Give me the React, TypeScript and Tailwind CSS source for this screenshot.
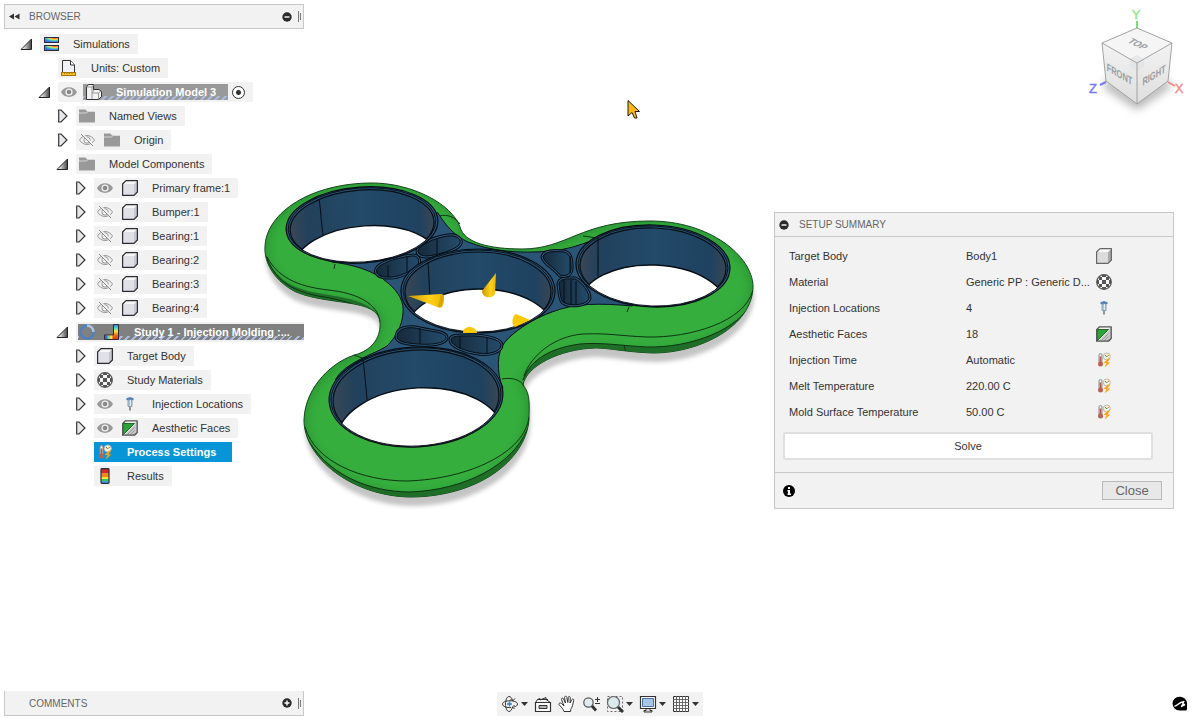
import type { ReactNode } from "react";

export default function App() {
  return (
    <div className="relative flex h-screen min-h-[560px] flex-col justify-between overflow-hidden bg-white font-['Liberation_Sans',Arial,sans-serif] text-[11px] text-[#333]">
      <Viewport />

      <div className="relative flex items-start justify-between">
        <aside className="w-[300px] pt-1 ml-1">
          <header className="flex h-[25px] items-center border border-[#c8c8c8] bg-[#f2f2f2] pr-0.5 pl-1">
            <button type="button" aria-label="Collapse browser" className="flex w-5 items-center">
              <svg width="11" height="7" viewBox="0 0 11 7" fill="#333">
                <path d="M5 0.5V6.5L0 3.5ZM10.5 0.5V6.5L5.5 3.5Z" />
              </svg>
            </button>
            <h2 className="flex-1 text-[10px] text-[#666]">BROWSER</h2>
            <RoundButton label="Minimize browser" />
            <Grip />
          </header>

          <ul className="mt-[5px] pl-4">
            <Row label="Simulations" state="open" icon={<SimulationsIcon />}>
              <Row label="Units: Custom" icon={<UnitsIcon />} />
              <Row label="Simulation Model 3" state="open" eye="on" tone="active" icon={<ModelIcon />}>
                <Row label="Named Views" state="closed" icon={<FolderIcon />} />
                <Row label="Origin" state="closed" eye="off" icon={<FolderIcon />} />
                <Row label="Model Components" state="open" icon={<FolderIcon />}>
                  <Row label="Primary frame:1" state="closed" eye="on" icon={<BodyIcon />} />
                  <Row label="Bumper:1" state="closed" eye="off" icon={<BodyIcon />} />
                  <Row label="Bearing:1" state="closed" eye="off" icon={<BodyIcon />} />
                  <Row label="Bearing:2" state="closed" eye="off" icon={<BodyIcon />} />
                  <Row label="Bearing:3" state="closed" eye="off" icon={<BodyIcon />} />
                  <Row label="Bearing:4" state="closed" eye="off" icon={<BodyIcon />} />
                </Row>
                <Row label="Study 1 - Injection Molding :..." state="open" tone="study" icon={<StudyIcon />}>
                  <Row label="Target Body" state="closed" icon={<BodyIcon />} />
                  <Row label="Study Materials" state="closed" icon={<MaterialIcon />} />
                  <Row label="Injection Locations" state="closed" eye="on" icon={<InjectionIcon />} />
                  <Row label="Aesthetic Faces" state="closed" eye="on" icon={<FacesIcon />} />
                  <Row label="Process Settings" tone="selected" icon={<ProcessIcon />} />
                  <Row label="Results" icon={<ResultsIcon />} />
                </Row>
              </Row>
            </Row>
          </ul>
        </aside>

        <div className="flex flex-col items-end">
          <ViewCube />
          <SetupSummary />
        </div>
      </div>

      <footer className="relative grid grid-cols-[1fr_auto_1fr] items-end pb-1">
        <div className="ml-1 flex h-[25px] w-[300px] items-center border border-t-0 border-[#c8c8c8] bg-[#f2f2f2] pr-0.5 pl-6">
          <h2 className="flex-1 text-[10px] text-[#666]">COMMENTS</h2>
          <RoundButton label="Add comment" plus />
          <Grip />
        </div>
        <Toolbar />
        <button type="button" aria-label="Assistant" className="mr-3 mb-1 justify-self-end">
          <svg width="16" height="16" viewBox="0 0 16 16">
            <path d="M7.500 0.800a7 6.800 0 1 0 0 13.600H13.500a1.500 1.500 0 0 0 1.500-1.500V7.500A7 6.800 0 0 0 7.500 0.800Z" fill="#000" />
            <path d="M2.500 10.200C6 10 6.500 6 11.500 5.800M12 5L10.500 8.500H13L9 10.500" fill="none" stroke="#fff" strokeWidth="1.400" />
          </svg>
        </button>
      </footer>
    </div>
  );
}

/* ---------- browser tree ---------- */

type RowProps = {
  label: string;
  icon: ReactNode;
  state?: "open" | "closed";
  eye?: "on" | "off";
  tone?: "active" | "study" | "selected";
  children?: ReactNode;
};

function Row({ label, icon, state, eye, tone, children }: RowProps) {
  return (
    <li>
      <div className="mb-1 flex h-5 items-center">
        <span className="flex w-5 shrink-0 items-center">
          {state && (
            <button type="button" aria-label={`Toggle ${label}`} aria-expanded={state === "open"}>
              {state === "open" ? <OpenArrow /> : <ClosedArrow />}
            </button>
          )}
        </span>

        {tone === "study" ? (
          <div className="flex h-5 flex-1 items-center bg-[#f2f2f2] pl-0.5">
            <div className="flex h-4 flex-1 items-center bg-[#808080] bg-[repeating-linear-gradient(135deg,#a9b9dc_0px,#a9b9dc_2px,transparent_2px,transparent_5px)] bg-[length:100%_4px] bg-bottom bg-no-repeat pl-px font-bold text-white">
              <span className="flex bg-[#808080] pr-[9px]">
                <Spinner />
              </span>
              {icon}
              <button type="button" className="ml-3.5 whitespace-nowrap">{label}</button>
            </div>
          </div>
        ) : tone === "active" ? (
          <div className="flex h-5 items-center bg-[#f2f2f2] pr-2 pl-[3px]">
            <EyeButton on label={label} />
            <div className="ml-1.5 flex h-4 items-center bg-[#999] bg-[repeating-linear-gradient(135deg,#a9b9dc_0px,#a9b9dc_2px,transparent_2px,transparent_5px)] bg-[length:100%_4px] bg-bottom bg-no-repeat pr-3 pl-[3px] font-bold text-white">
              {icon}
              <button type="button" className="ml-3.5 whitespace-nowrap">{label}</button>
            </div>
            <input
              type="radio"
              defaultChecked
              aria-label={`Activate ${label}`}
              className="ml-1 size-[13px] appearance-none rounded-full border border-[#333] bg-[radial-gradient(circle,#333_0px,#333_2px,#fff_3px)]"
            />
          </div>
        ) : (
          <div className={`flex h-5 items-center pl-[3px] ${tone === "selected" ? "bg-[#0696d7] pr-4 font-bold text-white" : "bg-[#f2f2f2] pr-2"}`}>
            {eye && (
              <span className="mr-[9px] flex">
                <EyeButton on={eye === "on"} label={label} />
              </span>
            )}
            {icon}
            <button type="button" className="ml-3.5 whitespace-nowrap">{label}</button>
          </div>
        )}
      </div>
      {children && <ul className="pl-[18px]">{children}</ul>}
    </li>
  );
}

function OpenArrow() {
  return (
    <svg width="12" height="12" viewBox="0 0 12 12">
      <defs>
        <linearGradient id="arrow" x1="0" y1="0" x2="1" y2="0">
          <stop offset="0.200" stopColor="#eee" />
          <stop offset="1" stopColor="#444" />
        </linearGradient>
      </defs>
      <path d="M11.500 1V11.500H1Z" fill="url(#arrow)" stroke="#222" />
    </svg>
  );
}

function ClosedArrow() {
  return (
    <svg width="12" height="14" viewBox="0 0 12 14" className="ml-0.5">
      <path d="M0.700 1H3L9 7L3 13H0.700Z" fill="#e6e8ec" stroke="#333" strokeWidth="1.200" />
    </svg>
  );
}

function EyeButton({ on, label }: { on: boolean; label: string }) {
  return (
    <button type="button" aria-label={`Visibility of ${label}`}>
      {on ? (
        <svg width="16" height="16" viewBox="0 0 16 16">
          <path d="M0 8C3 1.500 13 1.500 16 8C13 14.500 3 14.500 0 8Z" fill="#999" />
          <circle cx="8" cy="8" r="3.600" fill="#f2f2f2" />
          <circle cx="8" cy="8" r="2.300" fill="#888" />
        </svg>
      ) : (
        <svg width="16" height="16" viewBox="0 0 16 16" fill="none" stroke="#999">
          <path d="M0.500 8C4 2 12 2 15.500 8C12 14 4 14 0.500 8Z" />
          <circle cx="8" cy="8" r="3.200" />
          <path d="M3.500 2L15 13.500" stroke="#f2f2f2" strokeWidth="1.500" />
          <path d="M2 2L14 14" stroke="#888" />
        </svg>
      )}
    </button>
  );
}

function Spinner() {
  return (
    <svg width="16" height="16" viewBox="0 0 16 16" fill="none" strokeWidth="2.500">
      <circle cx="8" cy="8" r="6.500" stroke="#4d80bd" />
      <path d="M8 1.500A6.500 6.500 0 0 1 14.500 8" stroke="#b4c3d6" />
    </svg>
  );
}

/* ---------- 16px icons ---------- */

function SimulationsIcon() {
  return (
    <svg width="16" height="16" viewBox="0 0 16 16">
      <defs>
        <radialGradient id="heat" cx="0.750" cy="0" r="0.850" gradientUnits="objectBoundingBox">
          <stop offset="0" stopColor="#e8302a" />
          <stop offset="0.250" stopColor="#fb7a2c" />
          <stop offset="0.450" stopColor="#f6d646" />
          <stop offset="0.700" stopColor="#58d4b4" />
          <stop offset="1" stopColor="#3a78e0" />
        </radialGradient>
      </defs>
      <rect x="1.500" y="1.500" width="14" height="5" fill="url(#heat)" stroke="#2b2b3a" />
      <rect x="1.500" y="9.500" width="14" height="5" fill="url(#heat)" stroke="#2b2b3a" />
    </svg>
  );
}

function UnitsIcon() {
  return (
    <svg width="16" height="16" viewBox="0 0 16 16">
      <path d="M1.500 13V0.500H9.500L13.500 5V13Z" fill="#f1f3f7" stroke="#333" />
      <path d="M9.500 0.500V5H13.500" fill="#fff" stroke="#333" />
      <rect x="0.500" y="12.500" width="14" height="3" fill="#f5c52c" stroke="#a87400" />
      <path d="M3.500 12.500V14M6 12.500V14M8.500 12.500V14M11 12.500V14" stroke="#a87400" />
    </svg>
  );
}

function ModelIcon() {
  return (
    <svg width="16" height="16" viewBox="0 0 16 16" stroke="#333" strokeLinejoin="round">
      <path d="M0.500 3L2.500 0.500H7.500V5.500H13L15.500 7.500V12.500L12.500 15.500H0.500Z" fill="#f2f2f5" />
      <path d="M0.500 3H6L7.500 1M6 3V15M6 9L8 6M6 9H12.500V15M12.500 9L15 7" fill="none" stroke="#999" />
    </svg>
  );
}

function FolderIcon() {
  return (
    <svg width="16" height="16" viewBox="0 0 16 16" fill="#999">
      <path d="M0 1.500H6.500L8 3.500H16V14.500H0Z" />
      <path d="M0 5H7.500L9 3.500H16" fill="none" stroke="#ddd" strokeWidth="0.900" />
    </svg>
  );
}

function BodyIcon({ gray }: { gray?: boolean }) {
  return (
    <svg width="16" height="16" viewBox="0 0 16 16" strokeLinejoin="round">
      <path d="M0.800 4L4 0.800H15.200V12L12 15.200H0.800Z" fill={gray ? "#dadada" : "#fafafb"} />
      <path d="M0.800 4H12V15.200H0.800Z" fill={gray ? "#dcdcdc" : "#dfe1e7"} />
      <path d="M12 4L15.200 0.800V12L12 15.200Z" fill={gray ? "#aaa" : "#c6c8d2"} />
      <path d="M1 4H12L15 1H4Z" fill="#f7f7f8" />
      <path d="M0.600 4L4 0.600H15.400V12L12 15.400H0.600Z" fill="none" stroke={gray ? "#666" : "#2b2b30"} strokeWidth="1.200" />
    </svg>
  );
}

function MaterialIcon() {
  return (
    <svg width="16" height="16" viewBox="0 0 16 16">
      <circle cx="8" cy="8" r="7.300" fill="#f6f6f6" stroke="#555" strokeWidth="1.300" />
      <path
        d="M6 6H10V10H6ZM3 3H6V6H3ZM10 3H13V6H10ZM3 10H6V13H3ZM10 10H13V13H10ZM6 1H10V3H6ZM6 13H10V15H6ZM1 6H3V10H1ZM13 6H15V10H13Z"
        fill="#555"
      />
    </svg>
  );
}

function InjectionIcon() {
  return (
    <svg width="16" height="16" viewBox="0 0 16 16">
      <path d="M4.500 3H11.500" stroke="#4d7db3" strokeWidth="2.200" />
      <path d="M6.500 1.500H9.500" stroke="#7898bb" />
      <path d="M6 4H10V10.500H6Z" fill="#a9c7df" stroke="#8c9dad" />
      <path d="M8.500 4V10" stroke="#dcecf5" />
      <path d="M8 11V14.500" stroke="#8a949f" strokeWidth="2" />
    </svg>
  );
}

function FacesIcon() {
  return (
    <svg width="16" height="16" viewBox="0 0 16 16" strokeLinejoin="round">
      <path d="M0.800 3.500L3.500 0.800H15.200V12.500L12.500 15.200H0.800Z" fill="#c8c8c8" />
      <path d="M0.800 3.500L3.500 0.800H15.200L12.500 3.500Z" fill="#f2f2f2" />
      <path d="M5 15L12.500 7.500M8 15L12.500 10.500M11 15L12.500 13.500" stroke="#999" />
      <path d="M0.800 3.500H12.500L0.800 15.200Z" fill="#2ca43a" stroke="#1d6b28" />
      <path d="M13.500 3.500L1.500 15.500" stroke="#eee" />
      <path d="M0.800 3.500L3.500 0.800H15.200V12.500L12.500 15.200H0.800Z" fill="none" stroke="#555" strokeWidth="1.300" />
    </svg>
  );
}

function ProcessIcon() {
  return (
    <svg width="16" height="16" viewBox="0 0 16 16">
      <rect x="3" y="1.500" width="3" height="10" rx="1.500" fill="#eee" stroke="#8c8c8c" />
      <path d="M4.500 4.500V12" stroke="#b5584c" strokeWidth="1.700" />
      <circle cx="4.500" cy="12" r="2.500" fill="#b86254" />
      <circle cx="10.800" cy="4.500" r="3.500" fill="#f5f2e8" stroke="#bdb8aa" />
      <path d="M10.800 5L9 3" stroke="#3d9140" />
      <path d="M11 4.500L13 3" stroke="#d98324" />
      <path d="M12 6.500L7.500 11H10.500L8.500 15.500L14.500 10.500H11.500L14 6.500Z" fill="#fca311" />
    </svg>
  );
}

function StudyIcon() {
  return (
    <svg width="16" height="16" viewBox="0 0 16 16">
      <defs>
        <linearGradient id="studyHeat" x1="0" y1="0" x2="0" y2="1">
          <stop offset="0" stopColor="#2e7de0" />
          <stop offset="0.250" stopColor="#4fe0c0" />
          <stop offset="0.450" stopColor="#f4e83c" />
          <stop offset="0.700" stopColor="#f07020" />
          <stop offset="1" stopColor="#e22a20" />
        </linearGradient>
      </defs>
      <path d="M9.500 0.500H14.500V15.500H0.500V11H9.500Z" fill="url(#studyHeat)" stroke="#2b2b3a" />
      <path d="M1 11.500H3.500V15H1Z" fill="#3d66d8" />
      <path d="M3.500 11.500H6V15H3.500Z" fill="#5fd8b0" />
      <path d="M6 11.500H8.500V15H6Z" fill="#f4dc3c" />
    </svg>
  );
}

function ResultsIcon() {
  return (
    <svg width="16" height="16" viewBox="0 0 16 16">
      <path d="M4 1H12V5H4Z" fill="#cf2a27" />
      <path d="M4 5H12V9H4Z" fill="#ef8a22" />
      <path d="M4 9H12V11H4Z" fill="#f3e734" />
      <path d="M4 11H12V13H4Z" fill="#3fc45a" />
      <path d="M4 13H12V15H4Z" fill="#3f9fe8" />
      <rect x="4" y="0.700" width="8" height="14.600" rx="0.800" fill="none" stroke="#2d2d3a" strokeWidth="1.200" />
    </svg>
  );
}

function RoundButton({ label, plus }: { label: string; plus?: boolean }) {
  return (
    <button type="button" aria-label={label}>
      <svg width="10" height="10" viewBox="0 0 10 10">
        <circle cx="5" cy="5" r="4.700" fill="#2b2b2b" />
        <path d={plus ? "M2.500 5H7.500M5 2.500V7.500" : "M2.500 5H7.500"} stroke="#fff" strokeWidth="1.400" />
      </svg>
    </button>
  );
}

function Grip() {
  return (
    <span className="ml-1.5 flex items-center gap-px">
      <span className="h-[11px] w-px bg-[#777]"></span>
      <span className="h-[7px] w-px bg-[#777]"></span>
    </span>
  );
}

/* ---------- setup summary ---------- */

function SetupSummary() {
  const rows = [
    { name: "Target Body", value: "Body1", icon: <BodyIcon gray /> },
    { name: "Material", value: "Generic PP : Generic D...", icon: <MaterialIcon /> },
    { name: "Injection Locations", value: "4", icon: <InjectionIcon /> },
    { name: "Aesthetic Faces", value: "18", icon: <FacesIcon /> },
    { name: "Injection Time", value: "Automatic", icon: <ProcessIcon /> },
    { name: "Melt Temperature", value: "220.00 C", icon: <ProcessIcon /> },
    { name: "Mold Surface Temperature", value: "50.00 C", icon: <ProcessIcon /> },
  ];

  return (
    <section className="mt-[92px] mr-[26px] w-[400px] border border-[#c8c8c8] bg-[#f2f2f2]">
      <header className="flex h-6 items-center gap-2.5 border-b border-[#c8c8c8] pl-1">
        <RoundButton label="Collapse setup summary" />
        <h2 className="text-[10px] text-[#666]">SETUP SUMMARY</h2>
      </header>

      <table className="mt-1.5 ml-3.5">
        <tbody>
          {rows.map((row) => (
            <tr key={row.name} className="h-[26px]">
              <th scope="row" className="w-[177px] p-0 text-left font-normal">{row.name}</th>
              <td className="w-[130px] p-0">{row.value}</td>
              <td className="p-0">{row.icon}</td>
            </tr>
          ))}
        </tbody>
      </table>

      <div className="mt-[7px] mr-5 mb-3 ml-2 flex">
        <button type="button" className="h-7 flex-1 rounded-xs border-2 border-[#e0e0e0] bg-white">
          Solve
        </button>
      </div>

      <footer className="flex h-9 items-center justify-between border-t border-[#c8c8c8] pr-[11px] pl-2">
        <button type="button" aria-label="Information">
          <svg width="12" height="12" viewBox="0 0 12 12">
            <circle cx="6" cy="6" r="6" fill="#000" />
            <path d="M5 2H7V4H5ZM4.500 5H7V8.500H8V10H4.500V8.500H5V6.500H4.500Z" fill="#fff" />
          </svg>
        </button>
        <button type="button" className="h-[19px] w-[60px] border border-[#b9b9b9] bg-[#e8e8e8] text-[13px] leading-none text-[#666]">
          Close
        </button>
      </footer>
    </section>
  );
}

/* ---------- navigation toolbar ---------- */

function Tool({ label, caret, children }: { label: string; caret?: boolean; children: ReactNode }) {
  return (
    <button type="button" aria-label={label} className="flex items-center gap-0.5">
      <svg width="18" height="18" viewBox="0 0 18 18" fill="none" stroke="#333">
        {children}
      </svg>
      {caret && (
        <svg width="7" height="4" viewBox="0 0 7 4" fill="#333">
          <path d="M0 0H7L3.500 4Z" />
        </svg>
      )}
    </button>
  );
}

function Toolbar() {
  return (
    <nav className="flex h-6 items-center gap-1.5 bg-[#f2f2f2] pr-1 pl-1">
      <Tool label="Orbit" caret>
        <path d="M10 12.500C6 13 1.500 11.500 1.500 9C1.500 7 5 5.800 9 5.800C13 5.800 16.500 7 16.500 9C16.500 10.500 15 11.500 13 12" />
        <path d="M11.500 5.500C11 3 9.500 1.500 8 1.500C6 1.500 4.500 5 4.500 9C4.500 13 6 16.500 8 16.500C9.500 16.500 11 14.500 11.500 12M14 3.500L11.500 6L9.500 4M13.500 14L11.500 12L13.500 10" />
        <path d="M6 9H11M8.500 6.500V11.500" stroke="#2f80c5" strokeWidth="1.500" />
      </Tool>
      <Tool label="Look at">
        <path d="M1.500 7.500H16.500V16.500H1.500Z" fill="#fff" strokeWidth="1.200" />
        <path d="M5 10.500H13V13.500H5Z" fill="#b4b4be" />
        <path d="M1.500 7.500L3.500 4.500L6 3.500V5L12 2.500V4.500L16.500 7.500M3.500 4.500H14" />
      </Tool>
      <Tool label="Pan">
        <path
          d="M6 16.500C5.500 14 2.500 11.500 1 9.500C0.500 8 2.500 7.500 3.500 8.500L6 11L3.500 4.500C3 3 5 2.500 5.500 4L7.500 8L6.500 2.500C6.500 1 8.500 0.800 8.800 2.300L9.800 7.500L10.300 2.500C10.500 1 12.300 1.200 12.300 2.700L12 8L13.800 4.700C14.500 3.500 16 4 15.700 5.400L14.500 10.500C14 13 12.500 13.500 12.500 16.500Z"
          fill="#fff"
        />
      </Tool>
      <Tool label="Zoom">
        <circle cx="6.500" cy="7.500" r="4.700" fill="#e2ecf0" stroke="#555" strokeWidth="1.200" />
        <path d="M10 11L14 15.500" strokeWidth="2.800" />
        <path d="M13 4.500H18M15.500 2V7M13 8.500H18" />
      </Tool>
      <Tool label="Zoom window" caret>
        <path d="M1.500 1.500H16.500V16.500H1.500Z" strokeDasharray="2 2" stroke="#666" />
        <circle cx="7.500" cy="7.500" r="6" fill="#dce9ec" stroke="#666" strokeWidth="1.200" />
        <path d="M12 12L17 17" strokeWidth="3" />
      </Tool>
      <Tool label="Display settings" caret>
        <path d="M1.500 1.500H16.500V13.500H1.500Z" fill="#fff" strokeWidth="1.200" />
        <path d="M3.500 3.500H14.500V11.500H3.500Z" fill="#a8c4e6" stroke="#4d73a3" />
        <path d="M7 13.500H11V15.500H13V17H5V15.500H7Z" fill="#d8d8d8" />
      </Tool>
      <Tool label="Grid and snaps" caret>
        <path d="M1.500 1.500H16.500V16.500H1.500Z" fill="#fff" />
        <path d="M4.500 1V17M7.500 1V17M10.500 1V17M13.500 1V17M1 4.500H17M1 7.500H17M1 10.500H17M1 13.500H17" stroke="#666" />
      </Tool>
    </nav>
  );
}

/* ---------- view cube ---------- */

function ViewCube() {
  return (
    <svg width="120" height="120" viewBox="0 0 120 120" className="font-['Liberation_Sans',Arial,sans-serif]">
      <defs>
        <filter id="cubeBlur" x="-30%" y="-30%" width="160%" height="160%">
          <feGaussianBlur stdDeviation="4" />
        </filter>
        <linearGradient id="cubeFace" x1="0" y1="0" x2="0" y2="1">
          <stop offset="0" stopColor="#f3f3f3" />
          <stop offset="1" stopColor="#dedede" />
        </linearGradient>
      </defs>
      <path d="M26 78L56 96L88 78L90 88L57 110L24 88Z" fill="#999" opacity="0.700" filter="url(#cubeBlur)" />
      <path d="M57 21V28" stroke="#6fe36f" strokeWidth="2" />
      <path d="M26 82L20 85" stroke="#7a7af0" strokeWidth="2" />
      <path d="M88 82L95 86" stroke="#f58a8a" strokeWidth="2" />
      <path d="M22 43L57 63V104L26 81Z" fill="url(#cubeFace)" />
      <path d="M92 43L57 63V104L88 81Z" fill="url(#cubeFace)" />
      <path d="M57 28L92 43L57 63L22 43Z" fill="#f5f5f5" />
      <path d="M50 59L57 55L64 59V67L57 71L50 67Z" fill="#dfe2e6" opacity="0.700" />
      <path d="M57 28L92 43L88 81L57 104L26 81L22 43ZM22 43L57 63L92 43M57 63V104" fill="none" stroke="#999" strokeWidth="0.900" />
      <g fill="#9a9da2" fontSize="11" fontWeight="bold" textAnchor="middle">
        <text transform="translate(39.500 78) skewY(30) scale(0.680 1)">FRONT</text>
        <text transform="translate(74 79) skewY(-31) scale(0.680 1)">RIGHT</text>
        <text transform="translate(55 46) rotate(26) skewX(-30)" fontSize="9">TOP</text>
      </g>
      <g fontSize="13" textAnchor="middle" strokeWidth="0.400">
        <text x="56" y="19" fill="#8aea8a" stroke="#8aea8a">Y</text>
        <text x="13" y="93" fill="#7a7af0" stroke="#7a7af0">Z</text>
        <text x="99" y="93" fill="#f58a8a" stroke="#f58a8a">X</text>
      </g>
    </svg>
  );
}

/* ---------- 3D model ---------- */

// outer outline of the bumper, all three lobes
const OUTLINE =
  "M265 247C266 212 312 183 372 183C412 183 452 204 460 227C464 243 490 249 522 249C568 249 580 221 650 221C710 221 752 256 753 286C753 326 700 353 653 353C625 352 610 348 595 348C560 349 526 366 523 385C531 394 529 406 529 420C525 462 476 497 410 497C352 496 304 458 304 420C305 386 334 360 358 354C374 348 381 336 380 322C378 298 330 306 296 292C276 282 264 264 265 247Z";

// blue frame that shows between the lobes
const FRAME =
  "M332 262C350 264 374 270 388 283C400 293 404 303 403 313C402 327 395 338 387 346C375 354 345 362 335 380L416 440L503 388C496 372 497 351 505 342C515 330 535 318 552 312C575 303 600 303 632 306L700 260L632 228C604 232 582 249 550 251C520 254 490 251 468 242C455 236 446 226 438 213L380 200Z";

const RINGS = [
  { id: "ringA", cx: 362, cy: 225, rx: 76, ry: 38, tilt: -4, drop: 38, seam: "M319 199C321 210 321 222 323 235" },
  { id: "ringB", cx: 653, cy: 266, rx: 77, ry: 41, tilt: 2, drop: 39, seam: "M598 238V276" },
  { id: "ringC", cx: 416, cy: 397, rx: 87, ry: 50, tilt: -3, drop: 40, seam: "M363 360C365 375 366 388 367 400" },
  { id: "ringD", cx: 478, cy: 291, rx: 77, ry: 42, tilt: 0, drop: 39, seam: "M428 262C429 275 429 284 430 296" },
];

const POCKETS = [
  { shape: "M377 273C373 265 395 258 412 256C419 255 420 262 417 266C411 271 398 278 388 277C382 277 379 276 377 273Z", seam: "M388 265V277M407 257V272" },
  { shape: "M418 251C419 245 434 238 448 236C457 235 463 240 459 245C454 250 438 255 427 256C421 256 418 254 418 251Z", seam: "M437 239V254" },
  { shape: "M543 257C544 251 556 251 564 252C571 254 571 260 571 269C570 276 565 276 560 275C554 267 545 264 543 257Z", seam: "M570 256V273" },
  { shape: "M559 284C560 278 567 279 575 279C582 282 589 292 589 298C588 305 570 307 563 302C560 299 560 290 559 284Z", seam: "M564 280V303M571 280V305M576 281V304" },
  { shape: "M397 336C398 328 409 326 420 329C433 332 446 332 446 338C445 343 432 345 418 344C406 343 397 342 397 336Z", seam: "M420 328V344" },
  { shape: "M451 340C451 335 462 336 475 336C489 337 500 340 501 345C501 351 490 355 478 353C463 351 451 345 451 340Z", seam: "M460 336V349M487 338V354" },
];

function Viewport() {
  return (
    <svg viewBox="0 0 1200 720" className="absolute inset-0 h-full w-full" role="img" aria-label="Spinner model">
      <defs>
        <filter id="soft" x="-20%" y="-20%" width="140%" height="140%">
          <feGaussianBlur stdDeviation="4" />
        </filter>
        <filter id="shadowBlur">
          <feGaussianBlur stdDeviation="2" />
        </filter>
        <linearGradient id="wall">
          <stop offset="0" stopColor="#3a4755" />
          <stop offset="0.130" stopColor="#21415c" />
          <stop offset="0.500" stopColor="#234a69" />
          <stop offset="0.900" stopColor="#1e4260" />
          <stop offset="1" stopColor="#3b4653" />
        </linearGradient>
        <linearGradient id="pocket">
          <stop offset="0" stopColor="#16293b" />
          <stop offset="1" stopColor="#244c6b" />
        </linearGradient>
        <linearGradient id="cone">
          <stop offset="0" stopColor="#c99a00" />
          <stop offset="0.600" stopColor="#ffd21a" />
          <stop offset="1" stopColor="#e8b400" />
        </linearGradient>
        <clipPath id="outlineClip">
          <path d={OUTLINE} />
        </clipPath>
        <mask id="holes">
          <rect width="1200" height="720" fill="#fff" />
          {RINGS.map((r) => (
            <ellipse key={r.id} cx={r.cx} cy={r.cy} rx={r.rx - 3} ry={r.ry - 2} fill="#000" />
          ))}
        </mask>
      </defs>

      <g mask="url(#holes)">
        <path d={OUTLINE} transform="translate(1 9)" fill="#8a8a8a" opacity="0.500" filter="url(#shadowBlur)" />
      </g>

      <path d={OUTLINE} fill="#36ae3e" stroke="#12401a" strokeWidth="1" />
      <g clipPath="url(#outlineClip)">
        <path d={OUTLINE} fill="none" stroke="#1c7427" strokeWidth="6" opacity="0.500" filter="url(#soft)" />
        {/* underside of the bumper */}
        <path
          d="M266 256C275 278 290 288 318 293C345 298 372 300 380 320L379 330L250 330V256ZM753 300C740 330 690 348 647 347C625 346 600 342 580 344C550 348 530 360 523 380L540 385L770 380V300ZM305 434C325 475 370 492 410 492C465 490 512 465 527 430L545 430V510H290V434Z"
          fill="#1f6e28"
        />
        <path
          d="M267 257C280 281 304 287 328 290C358 293 378 304 380 322M266 256C275 280 290 290 318 296C332 298 345 301 358 306M753 290C745 322 690 338 647 337C620 336 610 333 583 334C555 336 531 355 524 376M753 300C740 330 690 348 647 347C625 346 600 342 580 344C550 348 530 360 523 380M305 427C315 462 362 481 407 481C470 479 525 452 529 417M305 434C325 475 370 492 410 492C465 490 512 465 527 430M332 300L336 306M624 345L626 353"
          fill="none"
          stroke="#0d3413"
        />
      </g>
      <path d="M439 216C448 214 455 217 460 224M583 236L597 238M354 355L365 359M502 379C512 377 521 380 524 386M335 264L334 269M629 307L627 312" fill="none" stroke="#0d3413" />

      <path d={FRAME} fill="#2a5577" stroke="#06121d" strokeWidth="1" />

      {POCKETS.map((p) => (
        <g key={p.shape} strokeLinejoin="round">
          <path d={p.shape} fill="none" stroke="#050d15" strokeWidth="5" />
          <path d={p.shape} fill="none" stroke="#2d587a" strokeWidth="3" />
          <path d={p.shape} fill="url(#pocket)" stroke="#050d15" />
          <path d={p.seam} stroke="#050d15" />
        </g>
      ))}

      {RINGS.map((r) => (
        <g key={r.id} transform={`rotate(${r.tilt} ${r.cx} ${r.cy})`}>
          <clipPath id={r.id}>
            <ellipse cx={r.cx} cy={r.cy} rx={r.rx - 2} ry={r.ry - 1} />
          </clipPath>
          <ellipse cx={r.cx} cy={r.cy} rx={r.rx} ry={r.ry} fill="#2a5577" stroke="#050d15" strokeWidth="1.200" />
          <ellipse cx={r.cx} cy={r.cy + 1} rx={r.rx - 4} ry={r.ry - 2} fill="url(#wall)" stroke="#050d15" strokeWidth="1.200" />
          <g clipPath={`url(#${r.id})`}>
            <ellipse cx={r.cx + 2} cy={r.cy + r.drop} rx={r.rx - 4} ry={r.ry - 1} fill="#fff" stroke="#050d15" strokeWidth="1.400" />
          </g>
          <ellipse cx={r.cx} cy={r.cy} rx={r.rx - 2} ry={r.ry - 1} fill="none" stroke="#050d15" strokeWidth="0.900" />
        </g>
      ))}
      {RINGS.map((r) => (
        <path key={r.id} d={r.seam} fill="none" stroke="#050d15" />
      ))}

      {/* injection points */}
      <path d="M408 296L441 294Q445 295 444 301Q443 307 440 308Z" fill="url(#cone)" />
      <path d="M441 294L444 295L442 307L438 307Z" fill="#d9a600" />
      <path d="M496 273L482 291C482 299 494 299 495 293Z" fill="url(#cone)" />
      <path d="M463 333C463 325 476 325 477 333Z" fill="#fbc800" />
      <path d="M516 314L530 320L515 327C511 325 512 316 516 314Z" fill="#fbc800" />

      {/* bumper overlaps the centre ring on its lower right */}
      <path d="M505 342C515 330 535 318 552 312L556 325L515 350Z" fill="#36ae3e" />
      <path d="M505 342C515 330 535 318 552 312" fill="none" stroke="#06121d" />

      {/* pointer */}
      <path d="M628 100.500V116L632 112.500L634.500 118H637L635 111.500H639.500Z" fill="#fdb813" stroke="#1a1a1a" />
    </svg>
  );
}
